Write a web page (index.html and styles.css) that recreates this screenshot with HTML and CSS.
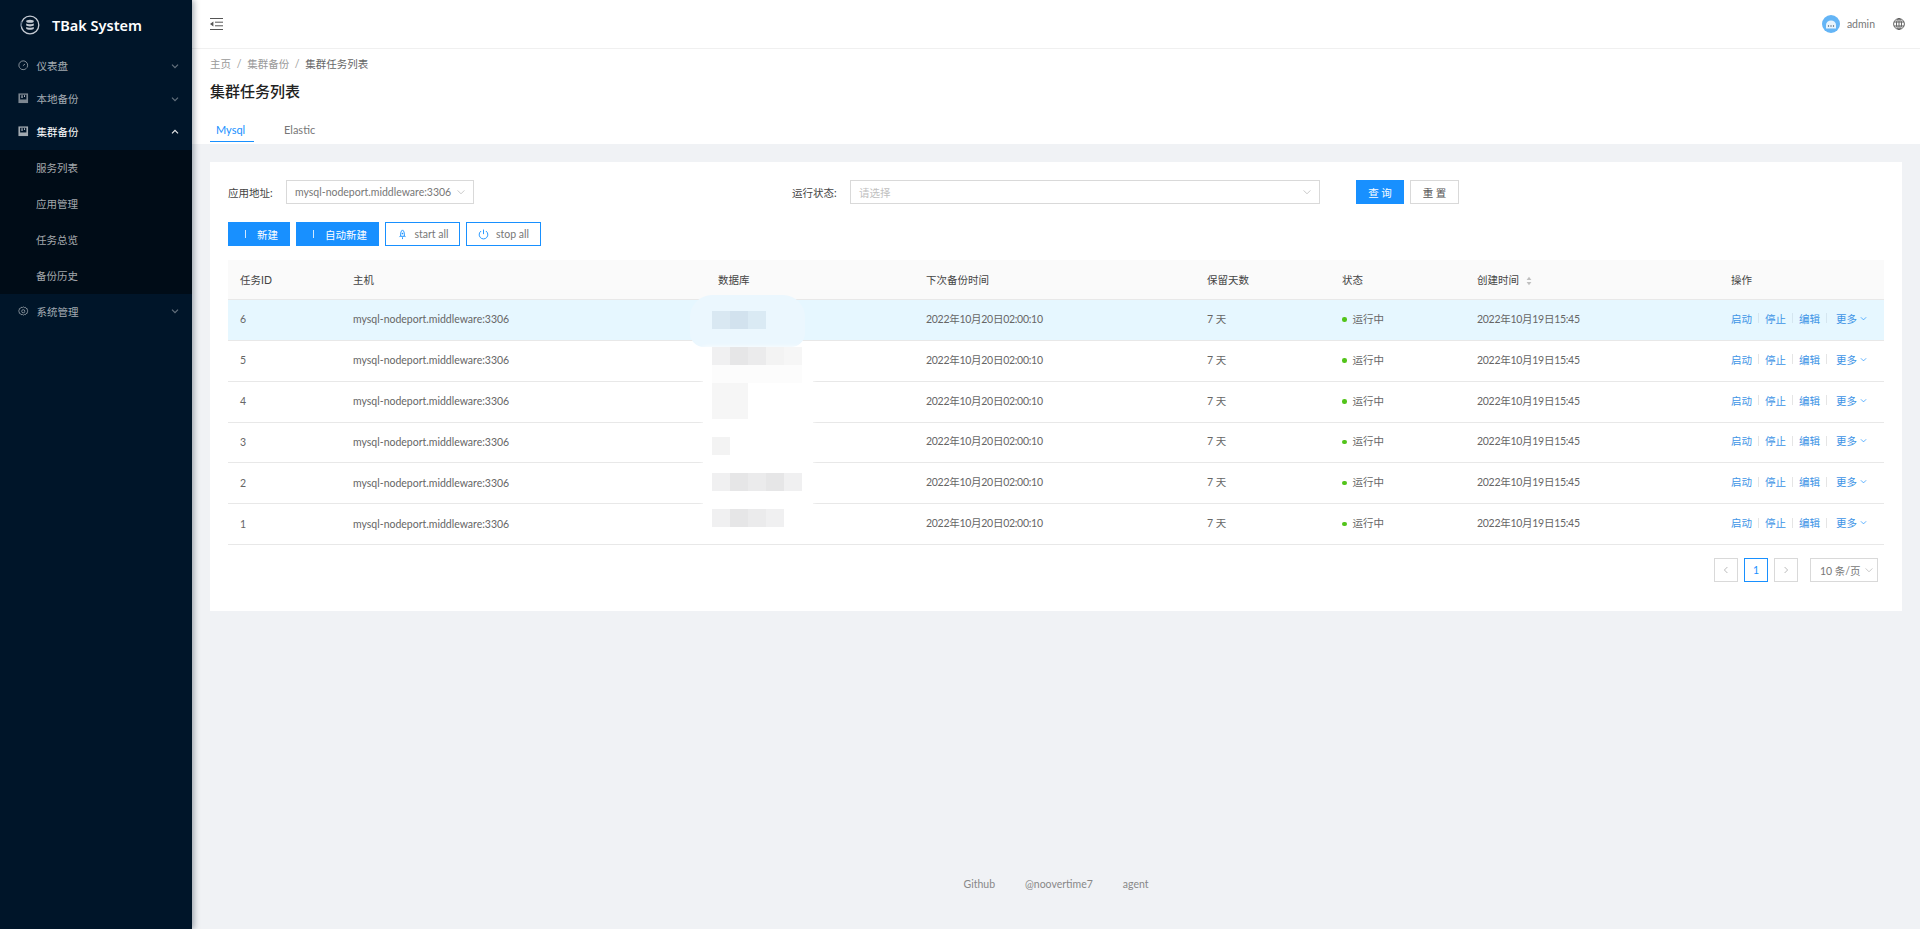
FILE: index.html
```html
<!DOCTYPE html>
<html lang="zh-CN">
<head>
<meta charset="utf-8">
<title>集群任务列表</title>
<link rel="stylesheet" href="styles.css">
</head>
<body>
<div class="layout">
  <aside class="sider">
    <div class="logo">
      <svg class="logo-mark" viewBox="0 0 20 20" width="20" height="20"><circle cx="10" cy="10" r="8.8" fill="none" stroke="#c4cad3" stroke-width="1.3"/><path d="M1.5 6.5A8.8 8.8 0 0 0 1.3 11.5" fill="none" stroke="#4d6077" stroke-width="1.5"/><ellipse cx="10" cy="6.3" rx="3.8" ry="1.5" fill="#c4cad3"/><path d="M6.2 8.6c1 1 6.6 1 7.6 0v2c-1 1.1-6.6 1.1-7.6 0zM6.2 12c1 1 6.6 1 7.6 0v1.8c-1 1.3-6.6 1.3-7.6 0z" fill="#c4cad3"/></svg>
      <span class="logo-text">TBak System</span>
    </div>
    <nav class="menu">
      <div class="menu-item">
        <svg class="mi" viewBox="0 0 12 12"><circle cx="6" cy="6" r="5" fill="none" stroke="currentColor" stroke-width=".9"/><path d="M2 8.8h8" stroke="#001529" stroke-width="1"/><path d="M5.6 6.6l2.4-2" stroke="currentColor" stroke-width=".9"/></svg>
        <span>仪表盘</span>
        <svg class="chev" viewBox="0 0 8 8"><path d="M1 2.6l3 3 3-3" fill="none" stroke="currentColor" stroke-width="1.2"/></svg>
      </div>
      <div class="menu-item">
        <svg class="mi" viewBox="0 0 12 12"><path d="M.5.5h11v11H.5z" fill="currentColor" opacity=".75"/><path d="M2.4 2h7.2v5.4H2.4z" fill="#001529"/><path d="M4 2.6h1.2v3H4zM7 2.6h1v2H7z" fill="#cfd4da"/></svg>
        <span>本地备份</span>
        <svg class="chev" viewBox="0 0 8 8"><path d="M1 2.6l3 3 3-3" fill="none" stroke="currentColor" stroke-width="1.2"/></svg>
      </div>
      <div class="menu-item is-open">
        <svg class="mi" viewBox="0 0 12 12"><path d="M.5.5h11v11H.5z" fill="currentColor" opacity=".75"/><path d="M2.4 2h7.2v5.4H2.4z" fill="#001529"/><path d="M4 2.6h1.2v3H4zM7 2.6h1v2H7z" fill="#e8ebee"/></svg>
        <span>集群备份</span>
        <svg class="chev" viewBox="0 0 8 8"><path d="M1 5.4l3-3 3 3" fill="none" stroke="currentColor" stroke-width="1.2"/></svg>
      </div>
      <div class="submenu">
        <div class="sub-item">服务列表</div>
        <div class="sub-item">应用管理</div>
        <div class="sub-item">任务总览</div>
        <div class="sub-item">备份历史</div>
      </div>
      <div class="menu-item menu-item-last">
        <svg class="mi" viewBox="0 0 12 12"><path d="M6 .9l1.1.9 1.4-.3.7 1.2 1.4.5-.1 1.4 1 1.1-1 1.1.1 1.4-1.4.5-.7 1.2-1.4-.3-1.1.9-1.1-.9-1.4.3-.7-1.2-1.4-.5.1-1.4-1-1.1 1-1.1-.1-1.4 1.4-.5.7-1.2 1.4.3z" fill="none" stroke="currentColor" stroke-width=".8"/><circle cx="6" cy="6" r="1.8" fill="none" stroke="currentColor" stroke-width=".8"/></svg>
        <span>系统管理</span>
        <svg class="chev" viewBox="0 0 8 8"><path d="M1 2.6l3 3 3-3" fill="none" stroke="currentColor" stroke-width="1.2"/></svg>
      </div>
    </nav>
  </aside>

  <div class="main">
    <header class="topbar">
      <svg class="collapse" viewBox="0 0 13 12" width="13" height="12"><path d="M0 .5h13M5 4.2h8M5 7.8h8M0 11.5h13" stroke="#555" stroke-width="1"/><path d="M3.4 3.6v4.8L0 6z" fill="#555"/></svg>
      <div class="top-right">
        <svg class="avatar" viewBox="0 0 18 18" width="18" height="18"><circle cx="9" cy="9" r="9" fill="#64b5f6"/><path d="M4 10a5 4.6 0 0 1 10 0v3.6H4z" fill="#e8f4fd"/><circle cx="6.5" cy="11" r=".7" fill="#456"/><circle cx="9" cy="11" r=".7" fill="#456"/><circle cx="11.5" cy="11" r=".7" fill="#456"/></svg>
        <span class="user">admin</span>
        <svg class="globe" viewBox="0 0 12 12" width="12" height="12"><g fill="none" stroke="#555" stroke-width=".9"><circle cx="6" cy="6" r="5.4"/><ellipse cx="6" cy="6" rx="2.5" ry="5.4"/><path d="M6 .6v10.8M1 4h10M1 8h10"/></g></svg>
      </div>
    </header>

    <section class="page-head">
      <div class="crumbs"><span>主页</span><i>/</i><span>集群备份</span><i>/</i><b>集群任务列表</b></div>
      <h1 class="title">集群任务列表</h1>
      <div class="tabs"><span class="tab tab-on">Mysql</span><span class="tab">Elastic</span></div>
    </section>

    <main class="content">
      <section class="card">
        <form class="filters">
          <label class="f-label">应用地址:</label>
          <div class="select sel-a"><span>mysql-nodeport.middleware:3306</span><svg class="sel-chev" viewBox="0 0 8 8"><path d="M.6 2.4L4 5.8l3.4-3.4" fill="none" stroke="#bbb" stroke-width=".8"/></svg></div>
          <label class="f-label f-label-b">运行状态:</label>
          <div class="select sel-b"><span class="ph">请选择</span><svg class="sel-chev" viewBox="0 0 8 8"><path d="M.6 2.4L4 5.8l3.4-3.4" fill="none" stroke="#bbb" stroke-width=".8"/></svg></div>
          <button type="button" class="btn primary btn-q">查 询</button>
          <button type="button" class="btn btn-r">重 置</button>
        </form>

        <div class="actions">
          <button type="button" class="btn primary b-new"><i class="bar"></i>新建</button>
          <button type="button" class="btn primary b-auto"><i class="bar"></i>自动新建</button>
          <button type="button" class="btn outline b-start"><svg viewBox="0 0 12 12" width="11" height="11"><path d="M6 1c1.6 1.4 2 3 2 4.4V8H4V5.4C4 4 4.4 2.4 6 1z" fill="none" stroke="#1890ff" stroke-width="1"/><path d="M4 7.2L2.8 8.8M8 7.2l1.2 1.6M6 9v2" stroke="#1890ff" stroke-width="1"/><circle cx="6" cy="5" r=".9" fill="#1890ff"/></svg>start all</button>
          <button type="button" class="btn outline b-stop"><svg viewBox="0 0 12 12" width="11" height="11"><path d="M3.4 2.2a4.7 4.7 0 1 0 5.2 0M6 .6v5" fill="none" stroke="#1890ff" stroke-width="1"/></svg>stop all</button>
        </div>

        <div class="table-wrap">
          <table class="table">
            <thead>
              <tr><th class="c1">任务ID</th><th class="c2">主机</th><th class="c3">数据库</th><th class="c4">下次备份时间</th><th class="c5">保留天数</th><th class="c6">状态</th><th class="c7">创建时间<svg class="sort" viewBox="0 0 8 10"><path d="M4 .8L6.4 4H1.6zM4 9.2L1.6 6h4.8z" fill="#bfbfbf"/></svg></th><th class="c8">操作</th></tr>
            </thead>
            <tbody>
              <tr class="hover"><td>6</td><td>mysql-nodeport.middleware:3306</td><td></td><td class="dt">2022年10月20日02:00:10</td><td>7 天</td><td><i class="dot"></i>运行中</td><td class="dt">2022年10月19日15:45</td><td><div class="ops"><a>启动</a><i></i><a>停止</a><i></i><a>编辑</a><i></i><a class="more">更多<svg viewBox="0 0 8 8"><path d="M1 2.6L4 5.6l3-3" fill="none" stroke="#1890ff" stroke-width=".8"/></svg></a></div></td></tr>
              <tr><td>5</td><td>mysql-nodeport.middleware:3306</td><td></td><td class="dt">2022年10月20日02:00:10</td><td>7 天</td><td><i class="dot"></i>运行中</td><td class="dt">2022年10月19日15:45</td><td><div class="ops"><a>启动</a><i></i><a>停止</a><i></i><a>编辑</a><i></i><a class="more">更多<svg viewBox="0 0 8 8"><path d="M1 2.6L4 5.6l3-3" fill="none" stroke="#1890ff" stroke-width=".8"/></svg></a></div></td></tr>
              <tr><td>4</td><td>mysql-nodeport.middleware:3306</td><td></td><td class="dt">2022年10月20日02:00:10</td><td>7 天</td><td><i class="dot"></i>运行中</td><td class="dt">2022年10月19日15:45</td><td><div class="ops"><a>启动</a><i></i><a>停止</a><i></i><a>编辑</a><i></i><a class="more">更多<svg viewBox="0 0 8 8"><path d="M1 2.6L4 5.6l3-3" fill="none" stroke="#1890ff" stroke-width=".8"/></svg></a></div></td></tr>
              <tr><td>3</td><td>mysql-nodeport.middleware:3306</td><td></td><td class="dt">2022年10月20日02:00:10</td><td>7 天</td><td><i class="dot"></i>运行中</td><td class="dt">2022年10月19日15:45</td><td><div class="ops"><a>启动</a><i></i><a>停止</a><i></i><a>编辑</a><i></i><a class="more">更多<svg viewBox="0 0 8 8"><path d="M1 2.6L4 5.6l3-3" fill="none" stroke="#1890ff" stroke-width=".8"/></svg></a></div></td></tr>
              <tr><td>2</td><td>mysql-nodeport.middleware:3306</td><td></td><td class="dt">2022年10月20日02:00:10</td><td>7 天</td><td><i class="dot"></i>运行中</td><td class="dt">2022年10月19日15:45</td><td><div class="ops"><a>启动</a><i></i><a>停止</a><i></i><a>编辑</a><i></i><a class="more">更多<svg viewBox="0 0 8 8"><path d="M1 2.6L4 5.6l3-3" fill="none" stroke="#1890ff" stroke-width=".8"/></svg></a></div></td></tr>
              <tr><td>1</td><td>mysql-nodeport.middleware:3306</td><td></td><td class="dt">2022年10月20日02:00:10</td><td>7 天</td><td><i class="dot"></i>运行中</td><td class="dt">2022年10月19日15:45</td><td><div class="ops"><a>启动</a><i></i><a>停止</a><i></i><a>编辑</a><i></i><a class="more">更多<svg viewBox="0 0 8 8"><path d="M1 2.6L4 5.6l3-3" fill="none" stroke="#1890ff" stroke-width=".8"/></svg></a></div></td></tr>
            </tbody>
          </table>
          <div class="redact" aria-hidden="true">
            <div class="halo halo-blue"></div>
            <div class="halo halo-white"></div>
            <div class="tiles">
              <b class="a1"></b><b class="a2"></b><b class="a3"></b><u></u><u></u>
              <u></u><u></u><u></u><u></u><u></u>
              <b class="g1"></b><b class="g3"></b><b class="g2"></b><b class="g4"></b><b class="g5"></b>
              <b class="g6"></b><b class="g6"></b><b class="g6"></b><b class="g6"></b><b class="g6"></b>
              <b class="g5"></b><b class="g5"></b><u></u><u></u><u></u>
              <b class="g5"></b><b class="g5"></b><u></u><u></u><u></u>
              <u></u><u></u><u></u><u></u><u></u>
              <b class="g4"></b><u></u><u></u><u></u><u></u>
              <u></u><u></u><u></u><u></u><u></u>
              <b class="g1"></b><b class="g3"></b><b class="g2"></b><b class="g3"></b><b class="g1"></b>
              <u></u><u></u><u></u><u></u><u></u>
              <b class="g1"></b><b class="g3"></b><b class="g2"></b><b class="g1"></b><u></u>
            </div>
          </div>
        </div>

        <div class="pager">
          <span class="pg"><svg viewBox="0 0 8 8" width="8" height="8"><path d="M5.4 1L2.4 4l3 3" fill="none" stroke="#bbb" stroke-width="1"/></svg></span>
          <span class="pg pg-on">1</span>
          <span class="pg"><svg viewBox="0 0 8 8" width="8" height="8"><path d="M2.6 1l3 3-3 3" fill="none" stroke="#bbb" stroke-width="1"/></svg></span>
          <span class="size">10 条/页<svg viewBox="0 0 8 8" width="8" height="8"><path d="M.6 2.4L4 5.8l3.4-3.4" fill="none" stroke="#bbb" stroke-width=".8"/></svg></span>
        </div>
      </section>
    </main>

    <footer class="foot"><span>Github</span><span>@noovertime7</span><span>agent</span></footer>
  </div>
</div>
</body>
</html>
```

FILE: styles.css
```css
* { box-sizing: border-box; }
html, body { margin: 0; height: 100%; }
body {
  font-family: "Lato", "Noto Sans CJK SC", sans-serif;
  font-size: 10.5px;
  color: #555;
  background: #f0f2f5;
  overflow: hidden;
}
.layout { display: flex; height: 929px; }

.sider {
  width: 192px;
  flex: none;
  background: #001529;
  box-shadow: 2px 0 6px rgba(0, 21, 41, .35);
  color: rgba(255, 255, 255, .65);
  position: relative;
  z-index: 2;
}
.logo { height: 49px; display: flex; align-items: center; padding-left: 20px; gap: 12px; }
.logo-text { font-family: "Noto Sans", sans-serif; font-size: 14.5px; font-weight: 600; color: #fff; white-space: nowrap; }
.logo-mark { flex: none; }
.menu-item { height: 33px; display: flex; align-items: center; padding: 0 13px 0 18px; }
.menu-item span { flex: 1; margin-left: 8px; }
.mi { width: 10.5px; height: 10.5px; flex: none; }
.chev { width: 8px; height: 8px; flex: none; opacity: .6; }
.is-open { color: #fff; }
.is-open .chev { opacity: .9; }
.is-open .mi { opacity: .85; }
.submenu { background: #000c17; margin-top: 1.5px; }
.sub-item { height: 36px; display: flex; align-items: center; padding-left: 36px; }
.menu-item-last { margin-top: 1px; }

.main { flex: 1; min-width: 0; display: flex; flex-direction: column; }
.topbar {
  height: 49px;
  background: #fff;
  display: flex;
  align-items: center;
  justify-content: space-between;
  padding: 0 15px 1px 18px;
  border-bottom: 1px solid #f0f0f0;
}
.top-right { display: flex; align-items: center; }
.user { margin: 0 18px 0 7px; color: #777; }

.page-head { background: #fff; height: 95px; padding: 7px 18px 0; }
.crumbs { display: flex; gap: 6px; line-height: 16px; color: #999; }
.crumbs b { font-weight: 400; color: #666; }
.crumbs i { font-style: normal; margin: 0 -.3px; }
.title { margin: 7px 0 0; font-size: 15px; line-height: 24px; font-weight: 500; color: #222; }
.tabs { display: flex; margin-top: 16px; gap: 18px; }
.tab { padding: 0 6px; height: 23px; line-height: 22px; color: #777; font-size: 11px; }
.tab-on { color: #1890ff; border-bottom: 1.5px solid #1890ff; width: 44px; }
.tab-on + .tab { margin-left: 6px; }

.content { padding: 18px 18px 0; flex: 1; }
.card { background: #fff; height: 449px; padding: 18px; }

.filters { display: flex; align-items: center; height: 24px; }
.f-label { color: #444; width: 58px; flex: none; }
.f-label-b { width: 58px; margin-left: 318px; }
.select {
  height: 24px;
  border: 1px solid #d9d9d9;
  display: flex;
  align-items: center;
  justify-content: space-between;
  padding: 0 8px;
  color: #777;
  background: #fff;
  white-space: nowrap;
}
.sel-a { width: 188px; }
.sel-b { width: 470px; }
.ph { color: #bfbfbf; }
.sel-chev { width: 8px; height: 8px; flex: none; }
.btn {
  height: 24px;
  border: 1px solid #d9d9d9;
  background: #fff;
  color: #555;
  font: inherit;
  padding: 0;
  display: inline-flex;
  align-items: center;
  justify-content: center;
}
.primary { background: #1890ff; border-color: #1890ff; color: #fff; }
.outline { border-color: #1890ff; color: #777; gap: 7px; }
.btn-q { width: 48px; margin-left: 36px; }
.btn-r { width: 49px; margin-left: 6px; }
.actions { display: flex; gap: 6px; margin-top: 18px; }
.b-new { width: 62px; justify-content: flex-start; padding-left: 16px; }
.b-auto { width: 83px; justify-content: flex-start; padding-left: 16px; }
.b-start, .b-stop { width: 75px; }
.bar { width: 1px; height: 8px; background: rgba(255, 255, 255, .8); margin-right: 11px; }

.table-wrap { position: relative; margin-top: 14px; width: 1656px; }
.table { width: 100%; border-collapse: collapse; table-layout: fixed; }
.table th {
  height: 39.5px;
  background: #fafafa;
  font-weight: 400;
  text-align: left;
  padding: 0 12px;
  color: #444;
  border-bottom: 1px solid #e8e8e8;
}
.table td {
  height: 40.85px;
  padding: 0 12px 1px;
  color: #666;
  border-bottom: 1px solid #e8e8e8;
  white-space: nowrap;
}
.table td:nth-child(n+4) { padding-bottom: 3px; }
.table .dt { letter-spacing: -.28px; }
.hover td { background: #e6f7ff; }
.c1 { width: 113px; } .c2 { width: 365px; } .c3 { width: 208px; } .c4 { width: 281px; }
.c5 { width: 135px; } .c6 { width: 135px; } .c7 { width: 254px; } .c8 { width: 165px; }
.sort { width: 8px; height: 10px; margin-left: 6px; vertical-align: -1.5px; }
.dot { display: inline-block; width: 4.5px; height: 4.5px; border-radius: 50%; background: #52c41a; margin-right: 6px; vertical-align: 1px; }
.ops { display: flex; align-items: center; color: #1890ff; }
.ops i { width: 1px; height: 10px; background: #e5e5e5; margin: 0 6px; }
.hover .ops i { background: #d5e6f0; }
.ops a { color: #3d94e6; }
.more { margin-left: 3px; display: inline-flex; align-items: center; gap: 3px; }
.more svg { width: 7px; height: 7px; }

.redact { position: absolute; left: 462px; top: 35px; width: 135px; height: 250px; pointer-events: none; }
.halo { position: absolute; }
.halo-blue { left: 0; top: 0; width: 115px; height: 52px; background: #ebf7fe; border-radius: 22px 22px 14px 14px; }
.halo-white { left: 13px; top: 52px; width: 110px; height: 193px; background: #fff; border-radius: 0 0 16px 16px; box-shadow: 0 0 4px #fff; }
.tiles { position: absolute; left: 22px; top: 16px; display: grid; grid-template-columns: repeat(5, 18px); grid-auto-rows: 18px; }
.tiles u { display: block; }
.tiles b { display: block; }
.a1 { background: #d9e8f2; } .a2 { background: #d2e2ee; } .a3 { background: #daeaf4; }
.g1 { background: #f0f0f1; } .g2 { background: #ebebec; } .g3 { background: #e6e6e7; }
.g4 { background: #f3f3f3; } .g5 { background: #f6f6f6; } .g6 { background: #fcfcfc; }

.pager { display: flex; align-items: center; gap: 6px; margin-top: 13px; width: 1650px; justify-content: flex-end; }
.pg {
  width: 24px; height: 24px;
  border: 1px solid #d9d9d9;
  display: flex; align-items: center; justify-content: center;
  color: #888;
}
.pg-on { border-color: #1890ff; color: #1890ff; }
.size {
  width: 68px; height: 24px; margin-left: 6px;
  border: 1px solid #d9d9d9;
  display: flex; align-items: center; justify-content: space-between;
  padding: 0 4px 0 9px;
  color: #777;
}

.foot { height: 90px; display: flex; justify-content: center; gap: 30px; padding-top: 37px; color: #888; line-height: 16px; }
```
